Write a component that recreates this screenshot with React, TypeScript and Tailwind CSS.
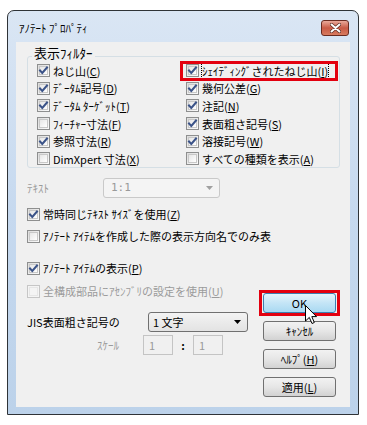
import type { ReactNode } from 'react';

function Box({ checked, disabled }: { checked?: boolean; disabled?: boolean }) {
  return (
    <span
      className={`flex-shrink-0 w-[13px] h-[13px] border flex items-center justify-center ${
        disabled
          ? 'border-[#c6c6c6] bg-[#f4f4f4]'
          : 'border-[#8e8f8f] bg-gradient-to-br from-[#dcdcdc] to-[#fbfbfb]'
      }`}
    >
      <span
        className={`w-[9px] h-[9px] border flex items-center justify-center ${
          disabled ? 'border-[#e6e6e6]' : 'border-[#c8c8c8] bg-gradient-to-br from-[#e6e6e6] to-[#ffffff]'
        }`}
      >
        {checked && (
          <svg width="11" height="11" viewBox="0 0 11 11" className="-m-[2px]">
            <path d="M2 5.5 L4.3 8 L9 2.5" fill="none" stroke="#3b5388" strokeWidth="2" strokeLinecap="square" />
          </svg>
        )}
      </span>
    </span>
  );
}

function Check({
  checked,
  disabled,
  children,
  focus,
  rowClass = 'h-[17.6px]',
}: {
  checked?: boolean;
  disabled?: boolean;
  children: ReactNode;
  focus?: boolean;
  rowClass?: string;
}) {
  return (
    <div className={`flex items-center whitespace-nowrap ${rowClass}`}>
      <Box checked={checked} disabled={disabled} />
      <span
        className={`ml-[3px] leading-[14px] ${disabled ? 'text-[#9b9b9b]' : 'text-black'} ${
          focus ? 'outline outline-1 outline-dotted outline-black' : ''
        }`}
      >
        {children}
      </span>
    </div>
  );
}

function Btn({ children, hover }: { children: ReactNode; hover?: boolean }) {
  return (
    <div
      className={`h-[20px] w-[73px] rounded-[3px] border flex items-center justify-center text-black ${
        hover
          ? 'border-[#3c7fb1] bg-gradient-to-b from-[#e5f4fc] via-[#c4e5f6] to-[#a9d9f2]'
          : 'border-[#707070] bg-gradient-to-b from-[#f2f2f2] via-[#e6e6e6] to-[#d2d2d2]'
      }`}
    >
      {children}
    </div>
  );
}

const M = ({ k }: { k: string }) => (
  <>
    (<span className="underline">{k}</span>)
  </>
);

export default function App() {
  return (
    <div className="relative w-[367px] h-[425px] bg-white pt-[10px] pl-[7px] text-[11px] font-['Noto_Sans_CJK_JP',sans-serif]">
      <div className="w-[352px] h-[405px] border border-[#2f3337] rounded-t-[7px] bg-gradient-to-b from-[#dae6f4] via-[#c6d9ef] to-[#bcd2ea] flex flex-col px-[8px] pb-[7px]">
        {/* Title bar */}
        <div className="h-[31px] flex items-start justify-between pt-[9px]">
          <span className="pl-[3px] text-[11px] leading-[16px] text-black">ｱﾉﾃｰﾄ ﾌﾟﾛﾊﾟﾃｨ</span>
          <div className="mr-[1px] w-[28px] h-[16px] rounded-[3px] border border-[#6a2b20] bg-gradient-to-b from-[#e9a99a] via-[#c85a45] to-[#d87b5f] flex items-center justify-center">
            <svg width="11" height="10" viewBox="0 0 11 10">
              <path d="M1.5 1.5 L9.5 8.5 M9.5 1.5 L1.5 8.5" stroke="#5a2a20" strokeWidth="3.4" strokeLinecap="round" />
              <path d="M1.5 1.5 L9.5 8.5 M9.5 1.5 L1.5 8.5" stroke="#ffffff" strokeWidth="2" strokeLinecap="round" />
            </svg>
          </div>
        </div>

        {/* Body */}
        <div className="flex-1 bg-[#f0f0f0] flex flex-col">
          {/* Filter group */}
          <div className="relative mt-[14px] ml-[11px] w-[313px] h-[112px] border border-[#d5dfe5] rounded-[3px]">
            <span className="absolute -top-[11px] left-[4px] px-[2px] bg-[#f0f0f0] text-[13px] leading-[14px]">表示ﾌｨﾙﾀｰ</span>
            <div className="flex pt-[5px] pl-[9px]">
              <div className="w-[149px] flex flex-col">
                <Check checked>ねじ山<M k="C" /></Check>
                <Check checked>ﾃﾞｰﾀﾑ記号<M k="D" /></Check>
                <Check checked>ﾃﾞｰﾀﾑ ﾀｰｹﾞｯﾄ<M k="T" /></Check>
                <Check>ﾌｨｰﾁｬｰ寸法<M k="F" /></Check>
                <Check checked>参照寸法<M k="R" /></Check>
                <Check>DimXpert 寸法<M k="X" /></Check>
              </div>
              <div className="flex flex-col">
                <div className="relative">
                  <div className="absolute -left-[6px] -top-[1px] w-[158px] h-[20px] border-[3px] border-[#e3000f]" />
                  <Check checked focus>ｼｪｲﾃﾞｨﾝｸﾞされたねじ山<M k="I" /></Check>
                </div>
                <Check checked>幾何公差<M k="G" /></Check>
                <Check checked>注記<M k="N" /></Check>
                <Check checked>表面粗さ記号<M k="S" /></Check>
                <Check checked>溶接記号<M k="W" /></Check>
                <Check>すべての種類を表示<M k="A" /></Check>
              </div>
            </div>
          </div>

          {/* Text scale */}
          <div className="mt-[10px] ml-[11px] flex items-center h-[20px]">
            <span className="w-[76px] text-[#9b9b9b]">ﾃｷｽﾄ</span>
            <div className="w-[117px] h-[20px] rounded-[3px] border border-[#c9c9c9] bg-[#f4f4f4] flex items-center justify-between pl-[7px] pr-[6px]">
              <span className="text-[#9a9a9a] font-['DejaVu_Sans_Mono',monospace] text-[11px]">1:1</span>
              <svg width="7" height="4" viewBox="0 0 7 4">
                <path d="M0 0 H7 L3.5 4 Z" fill="#a0a0a0" />
              </svg>
            </div>
          </div>

          <div className="ml-[11px] mt-[8px]">
            <Check checked rowClass="h-[16px]">常時同じﾃｷｽﾄ ｻｲｽﾞを使用<M k="Z" /></Check>
          </div>
          <div className="ml-[11px] mt-[6px] w-[244px] overflow-hidden">
            <Check rowClass="h-[16px]">ｱﾉﾃｰﾄ ｱｲﾃﾑを作成した際の表示方向名でのみ表示</Check>
          </div>
          <div className="ml-[11px] mt-[16px]">
            <Check checked rowClass="h-[16px]">ｱﾉﾃｰﾄ ｱｲﾃﾑの表示<M k="P" /></Check>
          </div>

          <div className="flex">
            {/* Left column */}
            <div className="flex-1 flex flex-col pl-[11px]">
              <div className="mt-[7px]">
                <Check disabled rowClass="h-[16px]">全構成部品にｱｾﾝﾌﾞﾘの設定を使用<M k="U" /></Check>
              </div>
              <div className="mt-[13px] flex items-center h-[20px]">
                <span className="w-[121px]">JIS表面粗さ記号の</span>
                <div className="w-[100px] h-[20px] rounded-[3px] border border-[#707070] bg-gradient-to-b from-[#f3f3f3] to-[#e3e3e3] flex items-center justify-between pl-[4px] pr-[6px]">
                  <span>1 文字</span>
                  <svg width="7" height="4" viewBox="0 0 7 4">
                    <path d="M0 0 H7 L3.5 4 Z" fill="#000" />
                  </svg>
                </div>
              </div>
              <div className="mt-[3px] flex items-center h-[20px]">
                <span className="ml-[70px] w-[46px] text-[#9b9b9b]">ｽｹｰﾙ</span>
                <div className="w-[30px] h-[20px] border border-[#c4c4c4] bg-[#f0f0f0] pl-[5px] flex items-center text-[#9a9a9a]">1</div>
                <span className="w-[20px] text-center font-bold">:</span>
                <div className="w-[30px] h-[20px] border border-[#c4c4c4] bg-[#f0f0f0] pl-[5px] flex items-center text-[#9a9a9a]">1</div>
              </div>
            </div>

            {/* Buttons */}
            <div className="mr-[10px] mt-[14px] w-[81px] flex flex-col items-center">
              <div className="border-[3px] border-[#e3000f] px-[1px]">
                <Btn hover>OK</Btn>
              </div>
              <div className="mt-[5px]">
                <Btn>ｷｬﾝｾﾙ</Btn>
              </div>
              <div className="mt-[8px]">
                <Btn>ﾍﾙﾌﾟ<M k="H" /></Btn>
              </div>
              <div className="mt-[8px]">
                <Btn>適用<M k="L" /></Btn>
              </div>
            </div>
          </div>
        </div>
      </div>

      {/* Mouse cursor */}
      <svg className="absolute left-[305px] top-[305px]" width="13" height="20" viewBox="0 0 13 20">
        <path d="M0.5 0.5 L0.5 16 L4.3 12.4 L7 18.5 L9.3 17.5 L6.8 11.6 L11.5 11.6 Z" fill="#fff" stroke="#000" strokeWidth="1" />
      </svg>
    </div>
  );
}
